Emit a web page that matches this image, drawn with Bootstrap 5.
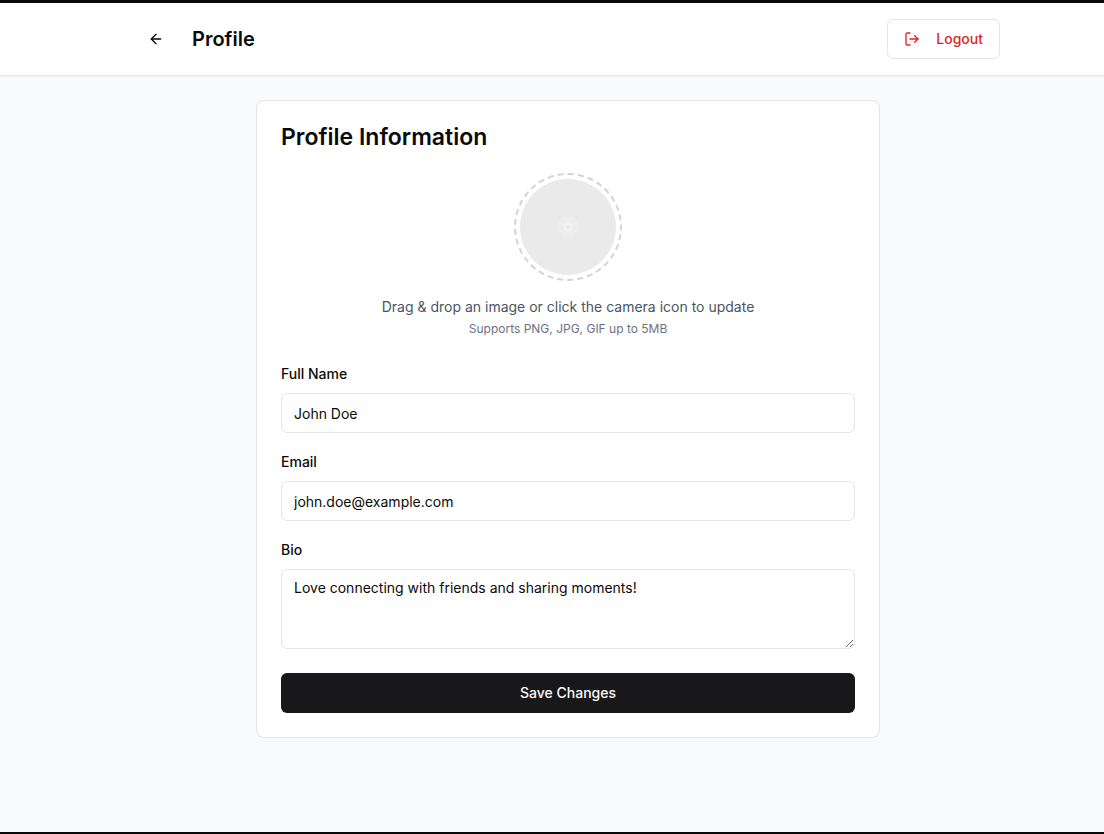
<!DOCTYPE html>
<html lang="en">
<head>
<meta charset="utf-8">
<meta name="viewport" content="width=device-width, initial-scale=1">
<title>Profile</title>
<link href="https://cdn.jsdelivr.net/npm/bootstrap@5.3.0/dist/css/bootstrap.min.css" rel="stylesheet">
<style>
  body {
    font-family: Inter, "Liberation Sans", sans-serif;
    font-size: 14px;
    line-height: 20px;
    color: #0a0a0a;
    background: #f9fafb;
    border-top: 3px solid #0a0a0a;
    border-bottom: 2px solid #0a0a0a;
  }
  .app-header {
    background: #fff;
    border-bottom: 1px solid #e5e7eb;
    box-shadow: 0 1px 2px rgba(0, 0, 0, .05);
  }
  .app-header, .app-main { padding-left: 32px; }
  .header-inner { max-width: 896px; }
  .main-inner { max-width: 672px; }
  .page-title { font-size: 20px; line-height: 28px; }
  .btn {
    --bs-btn-font-size: 14px;
    --bs-btn-font-weight: 500;
    --bs-btn-line-height: 20px;
    --bs-btn-border-radius: 6px;
    height: 40px;
  }
  .btn-back { width: 40px; --bs-btn-color: #0a0a0a; --bs-btn-hover-bg: #f5f5f5; }
  .btn-logout {
    --bs-btn-color: #dc2626;
    --bs-btn-bg: #fff;
    --bs-btn-border-color: #e5e5e5;
    --bs-btn-hover-color: #b91c1c;
    --bs-btn-hover-bg: #fef2f2;
    --bs-btn-hover-border-color: #e5e5e5;
  }
  .btn-save {
    --bs-btn-color: #fafafa;
    --bs-btn-bg: #18181b;
    --bs-btn-hover-color: #fafafa;
    --bs-btn-hover-bg: #2f2f31;
  }
  .profile-card {
    --bs-card-border-color: #e5e5e5;
    --bs-card-border-radius: 8px;
  }
  .section-title { font-size: 23px; line-height: 24px; }
  .avatar-drop {
    width: 108px;
    height: 108px;
    padding: 4px;
    border: 2px dashed #d1d5db;
  }
  .avatar-face { background: #eaeaea; }
  .hint { color: #4b5563; }
  .hint-formats { color: #6b7280; font-size: 12px; line-height: 16px; }
  .field-caption { font-size: 16px; line-height: 24px; }
  .field-caption label { font-size: 14px; font-weight: 500; line-height: 14px; }
  .form-control {
    color: #0a0a0a;
    font-size: 14px;
    line-height: 20px;
    padding: 8px 12px;
    border-color: #e5e5e5;
    border-radius: 6px;
  }
  input.form-control { height: 40px; }
  textarea.form-control { min-height: 80px; }
</style>
</head>
<body class="d-flex flex-column min-vh-100">
<header class="app-header">
  <div class="header-inner mx-auto px-3 py-3 d-flex align-items-center justify-content-between">
    <div class="d-flex align-items-center gap-3">
      <button type="button" class="btn btn-back p-0 d-flex align-items-center justify-content-center" aria-label="Back">
        <svg width="16" height="16" viewBox="0 0 24 24" fill="none" stroke="currentColor" stroke-width="2" stroke-linecap="round" stroke-linejoin="round" aria-hidden="true"><path d="m12 19-7-7 7-7"/><path d="M19 12H5"/></svg>
      </button>
      <h1 class="page-title fw-semibold mb-0">Profile</h1>
    </div>
    <button type="button" class="btn btn-logout px-3 d-flex align-items-center gap-3">
      <svg width="16" height="16" viewBox="0 0 24 24" fill="none" stroke="currentColor" stroke-width="2" stroke-linecap="round" stroke-linejoin="round" aria-hidden="true"><path d="M9 21H5a2 2 0 0 1-2-2V5a2 2 0 0 1 2-2h4"/><path d="m16 17 5-5-5-5"/><path d="M21 12H9"/></svg>
      Logout
    </button>
  </div>
</header>
<main class="app-main flex-grow-1">
  <div class="main-inner mx-auto p-4">
    <section class="card profile-card">
      <div class="card-body p-4">
        <h2 class="section-title fw-semibold mb-4">Profile Information</h2>
        <div class="d-flex flex-column align-items-center text-center mb-4">
          <div class="avatar-drop rounded-circle mb-3">
            <div class="avatar-face rounded-circle w-100 h-100 d-flex align-items-center justify-content-center">
              <svg width="32" height="32" viewBox="0 0 32 32" fill="none" aria-hidden="true">
                <path d="M3 3l26 26M29 3L3 29" stroke="#e6e6e6"/>
                <circle cx="16" cy="16" r="10.5" fill="#eeeeee"/>
                <path d="M9 9l14 14M23 9L9 23M16 6v20M6 16h20" stroke="#ebebeb"/>
                <circle cx="16" cy="16" r="4" fill="#f6f6f6"/>
                <circle cx="16" cy="16" r="2" fill="#dedede"/>
                <circle cx="16" cy="16" r="1" fill="#eeeeee"/>
              </svg>
            </div>
          </div>
          <p class="hint mb-1">Drag &amp; drop an image or click the camera icon to update</p>
          <p class="hint-formats mb-0">Supports PNG, JPG, GIF up to 5MB</p>
        </div>
        <form>
          <div class="mb-3">
            <div class="field-caption mb-2"><label for="full-name">Full Name</label></div>
            <input class="form-control" type="text" id="full-name" value="John Doe">
          </div>
          <div class="mb-3">
            <div class="field-caption mb-2"><label for="email">Email</label></div>
            <input class="form-control" type="email" id="email" value="john.doe@example.com">
          </div>
          <div class="mb-4">
            <div class="field-caption mb-2"><label for="bio">Bio</label></div>
            <textarea class="form-control" id="bio" rows="3">Love connecting with friends and sharing moments!</textarea>
          </div>
          <button type="submit" class="btn btn-save w-100">Save Changes</button>
        </form>
      </div>
    </section>
  </div>
</main>
<script src="https://cdn.jsdelivr.net/npm/bootstrap@5.3.0/dist/js/bootstrap.bundle.min.js"></script>
</body>
</html>
